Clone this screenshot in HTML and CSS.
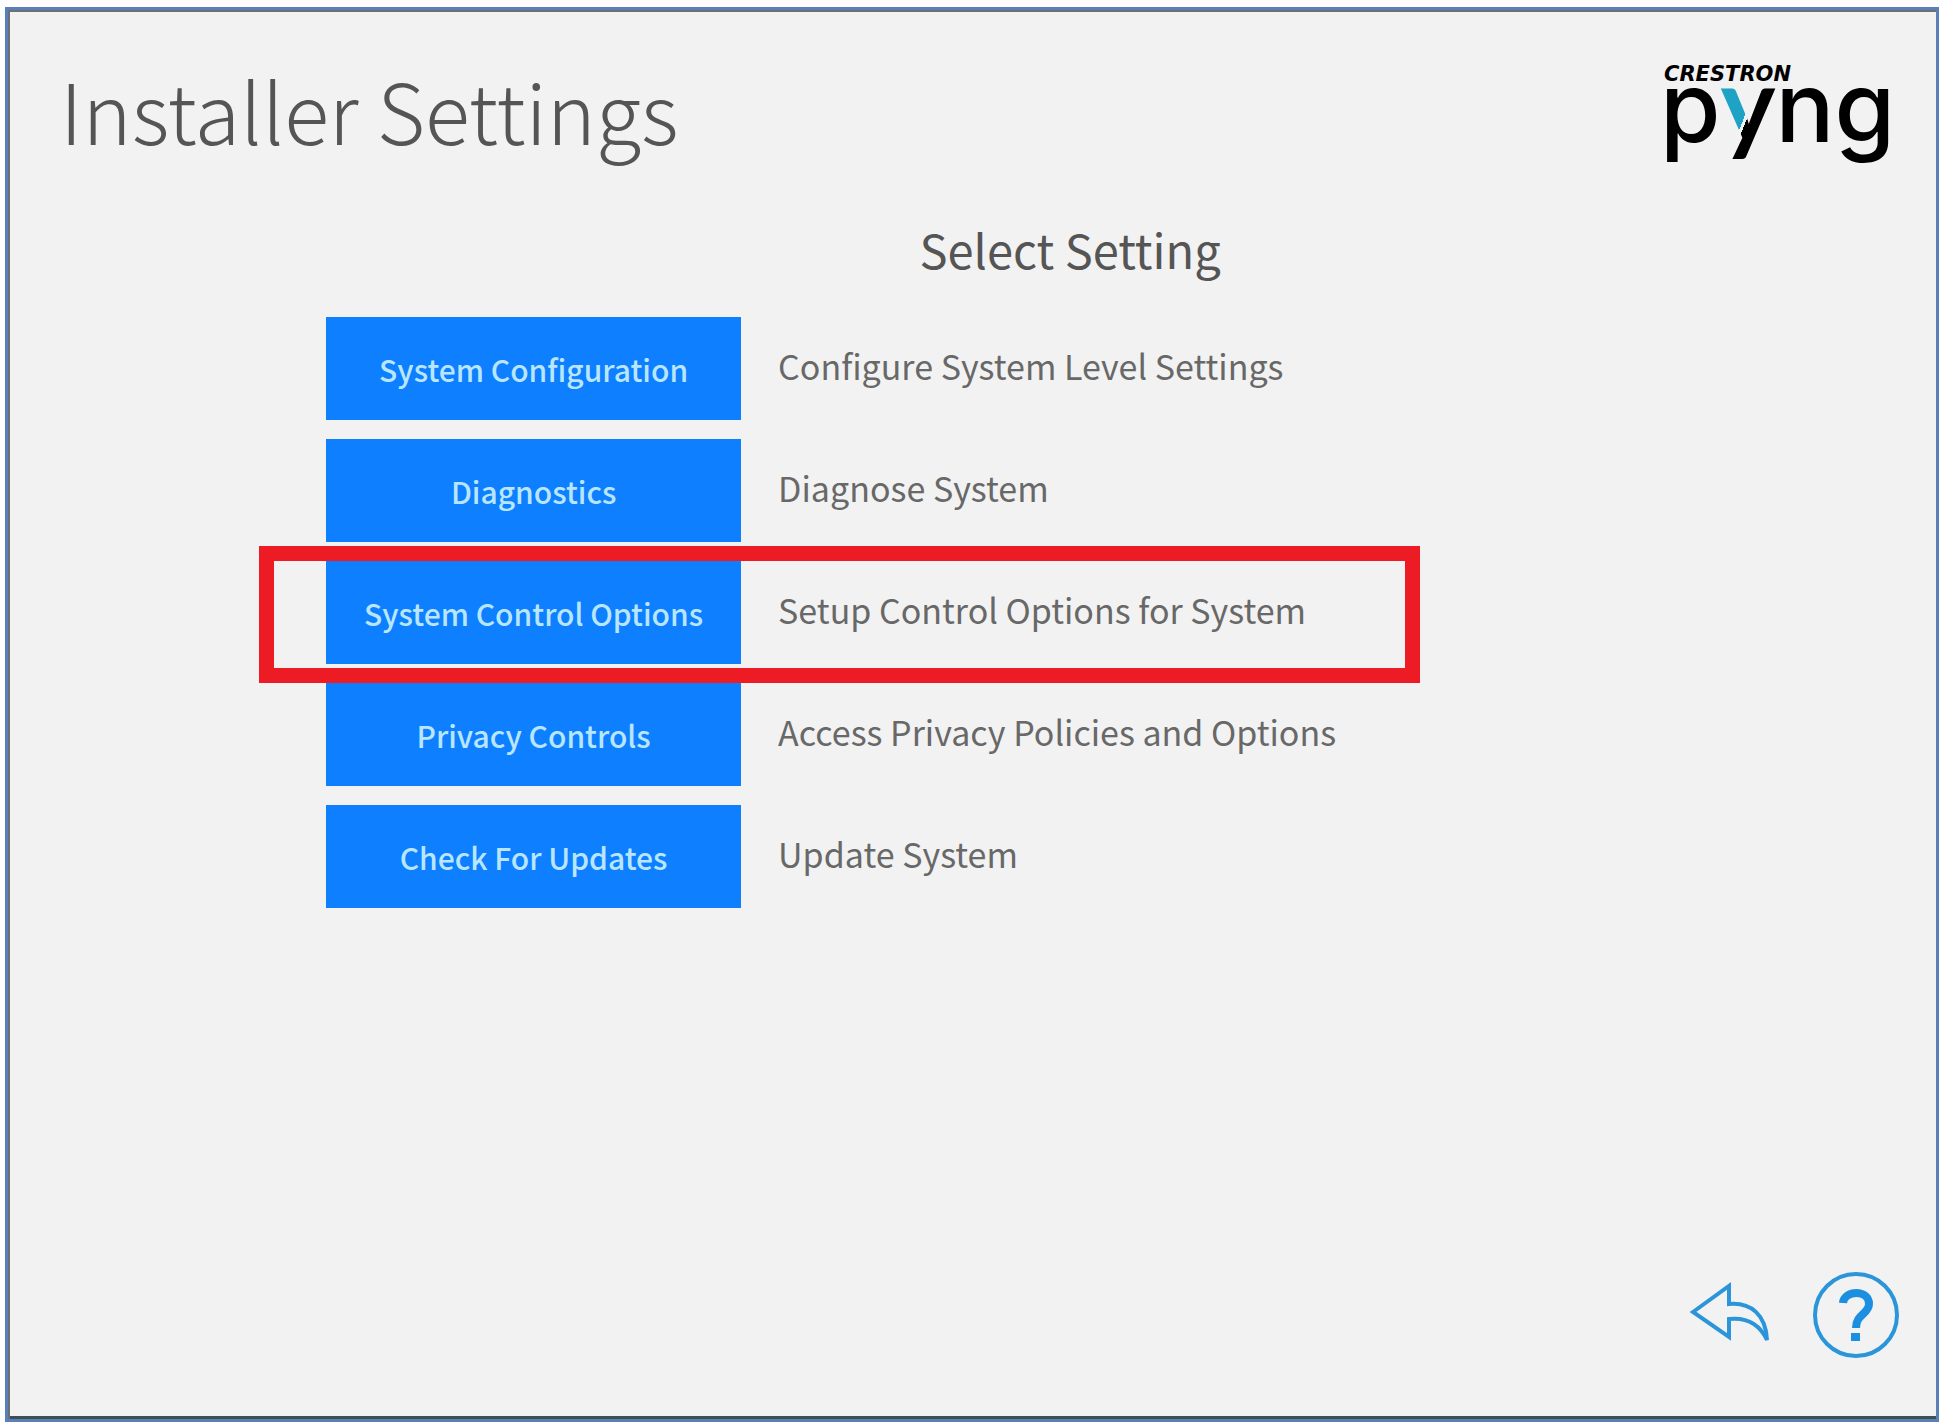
FILE: index.html
```html
<!DOCTYPE html>
<html lang="en">
<head>
<meta charset="utf-8">
<title>Installer Settings</title>
<meta name="viewport" content="width=device-width, initial-scale=1">
<link rel="stylesheet" href="styles.css">
</head>
<body>
<div class="frame">
  <header class="header">
    <h1 class="title">Installer Settings</h1>
    <svg class="logo" viewBox="0 0 232 104" role="img" aria-label="Crestron Pyng">
      <defs>
        <!-- Splits the y along its long stroke: cyan arm, thin gap, black stroke -->
        <linearGradient id="split" gradientUnits="userSpaceOnUse" x1="12" y1="32" x2="152" y2="86">
          <stop offset="47%" stop-color="#1fa3c4"/>
          <stop offset="47%" stop-color="#f2f2f2"/>
          <stop offset="49%" stop-color="#f2f2f2"/>
          <stop offset="49%" stop-color="#000"/>
        </linearGradient>
      </defs>
      <text class="logo-brand" x="0" y="15">CRESTRON</text>
      <text class="logo-name" x="-4" y="76">p<tspan class="logo-y">y</tspan>ng</text>
    </svg>
  </header>

  <main class="main">
    <h2 class="subtitle">Select Setting</h2>
    <ul class="settings">
      <li class="setting">
        <button class="setting-button" type="button" aria-describedby="d1">System Configuration</button>
        <p class="setting-text" id="d1">Configure System Level Settings</p>
      </li>
      <li class="setting">
        <button class="setting-button" type="button" aria-describedby="d2">Diagnostics</button>
        <p class="setting-text" id="d2">Diagnose System</p>
      </li>
      <li class="setting setting-marked">
        <button class="setting-button" type="button" aria-describedby="d3">System Control Options</button>
        <p class="setting-text" id="d3">Setup Control Options for System</p>
      </li>
      <li class="setting">
        <button class="setting-button" type="button" aria-describedby="d4">Privacy Controls</button>
        <p class="setting-text" id="d4">Access Privacy Policies and Options</p>
      </li>
      <li class="setting">
        <button class="setting-button" type="button" aria-describedby="d5">Check For Updates</button>
        <p class="setting-text" id="d5">Update System</p>
      </li>
    </ul>
  </main>

  <footer class="footer">
    <button class="icon-button" type="button" aria-label="Back">
      <svg width="84" height="84" viewBox="0 0 84 84">
        <path class="icon-line" d="M4 39 L40 13 V31 C62 29 77 42 78 67 C71 52 59 44 40 46 V64 Z"/>
      </svg>
    </button>
    <button class="icon-button" type="button" aria-label="Help">
      <svg width="86" height="86" viewBox="0 0 86 86">
        <circle class="icon-line" cx="43" cy="43" r="41"/>
        <path class="icon-mark" d="M30 31 C31 18 56 17 56 32 C56 42 43 42 43 56"/>
        <rect class="icon-dot" x="38" y="61" width="9" height="8"/>
      </svg>
    </button>
  </footer>
</div>
</body>
</html>
```
FILE: styles.css
```css
* {
  box-sizing: border-box;
}

body {
  margin: 0;
  padding: 7px 7px 4px 5px;
  background: #fff;
  color: #555;
  font-family: "Noto Sans CJK SC", "Noto Sans", sans-serif;
}

.frame {
  display: flex;
  flex-direction: column;
  min-height: calc(100vh - 11px);
  border: 3px solid #5b80b8;
  background: #f2f2f2;
  box-shadow: inset 2px 2px 0 #6b7078, inset 0 -3px 0 #3f4d56;
}

.header {
  display: flex;
  justify-content: space-between;
  align-items: flex-start;
  padding: 56px 40px 0 52px;
}

.title {
  margin: 0;
  font-size: 83px;
  line-height: 86px;
  font-weight: 300;
}

.logo {
  width: 232px;
  height: 104px;
  overflow: visible;
}

.logo-brand {
  font: italic bold 21px "DejaVu Sans", sans-serif;
  fill: #000;
}

.logo-name {
  font: 500 98px Inter, sans-serif;
  fill: #000;
}

.logo-y {
  font: bold 104px Lato, sans-serif;
  fill: url(#split);
}

.main {
  flex: 1;
  width: 1036px;
  max-width: 100%;
  margin-left: 16.5%;
}

.subtitle {
  margin: 45px 0 34px 452px;
  font-size: 47px;
  line-height: 68px;
  font-weight: 400;
  text-align: center;
}

.settings {
  display: grid;
  gap: 19px;
  margin: 0;
  padding: 0;
  list-style: none;
}

.setting {
  position: relative;
  display: grid;
  grid-template-columns: 415px 1fr;
  column-gap: 37px;
  align-items: center;
}

.setting-button {
  height: 103px;
  padding: 0;
  border: 0;
  background: #0d7fff;
  color: #b9e6ff;
  font: inherit;
  font-size: 30px;
  font-weight: 500;
  line-height: 48px;
}

.setting-text {
  margin: 0;
  padding-bottom: 6px;
  color: #686868;
  font-size: 34px;
  line-height: 48px;
  white-space: nowrap;
}

/* Frame laid over the marked row */
.setting-marked::after {
  content: "";
  position: absolute;
  z-index: 1;
  inset: -15px -58px -19px -67px;
  border: 15px solid #ed1c24;
  pointer-events: none;
}

.footer {
  display: flex;
  justify-content: flex-end;
  gap: 40px;
  padding: 0 37px 61px 0;
}

.icon-button {
  display: block;
  padding: 0;
  border: 0;
  background: none;
}

.icon-button svg {
  display: block;
}

.icon-line {
  fill: none;
  stroke: #2b95da;
  stroke-width: 4;
}

.icon-mark {
  fill: none;
  stroke: #1c8fe0;
  stroke-width: 8;
}

.icon-dot {
  fill: #1c8fe0;
}
```
